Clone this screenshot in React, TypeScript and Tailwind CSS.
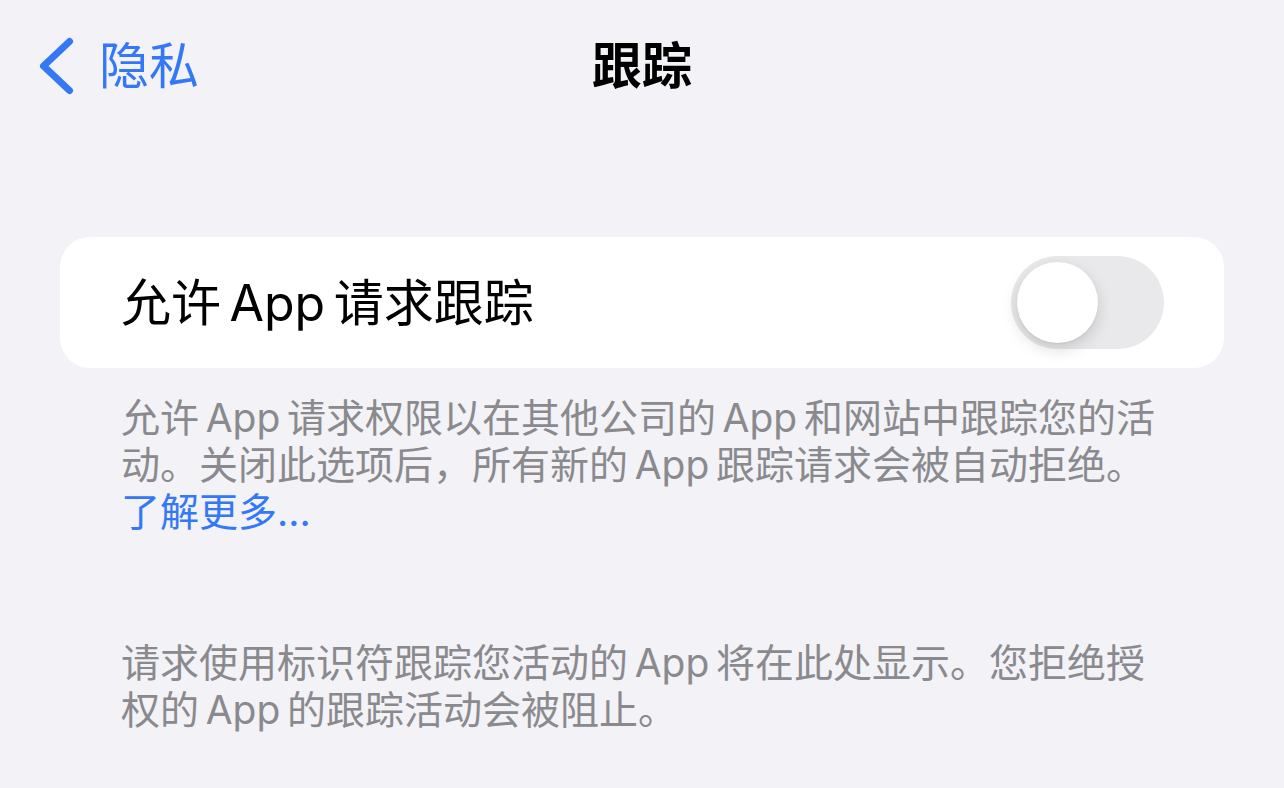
const FONT = "font-['Inter','Noto_Sans_CJK_SC',sans-serif]";

// Latin words inside Chinese text get a little breathing room, like iOS does
const Latin = ({ children }: { children: React.ReactNode }) => (
  <span className="mx-[0.17em]">{children}</span>
);

const BackChevron = () => (
  <svg width="38" height="60" viewBox="0 0 38 60" fill="none" className="shrink-0">
    <path
      d="M32.5 5.5 L6.5 30 L32.5 54.5"
      stroke="currentColor"
      strokeWidth="7"
      strokeLinecap="round"
      strokeLinejoin="round"
    />
  </svg>
);

const Toggle = ({ on = false }: { on?: boolean }) => (
  <div
    className={`relative h-[93px] w-[153px] shrink-0 rounded-full ${
      on ? 'bg-[#34c759]' : 'bg-[#e9e9eb]'
    }`}
  >
    <div
      className={`absolute top-[6px] h-[81px] w-[81px] rounded-full bg-white shadow-[0_6px_16px_rgba(0,0,0,0.15),0_1px_2px_rgba(0,0,0,0.06)] ${
        on ? 'right-[6px]' : 'left-[6px]'
      }`}
    />
  </div>
);

export default function App() {
  return (
    <div className={`min-h-screen w-full bg-[#f2f2f7] ${FONT} antialiased`}>
      {/* Nav bar */}
      <header className="grid h-[132px] grid-cols-[1fr_auto_1fr] items-center">
        <button className="flex items-center gap-[24px] pl-[37px] text-[#3478f6]">
          <BackChevron />
          <span className="text-[50px] leading-none">隐私</span>
        </button>
        <h1 className="text-[50px] font-semibold leading-none text-black">跟踪</h1>
        <div />
      </header>

      {/* Setting card */}
      <section className="mx-[60px] mt-[105px] flex h-[131px] items-center justify-between rounded-[30px] bg-white pl-[61px] pr-[60px]">
        <span className="text-[50px] leading-none text-black">
          允许<Latin>App</Latin>请求跟踪
        </span>
        <Toggle />
      </section>

      <p className="mt-[26px] px-[121px] text-[39px] leading-[47px] text-[#8a8a8e]">
        允许<Latin>App</Latin>请求权限以在其他公司的<Latin>App</Latin>和网站中跟踪您的活
        <br />
        动。关闭此选项后，所有新的<Latin>App</Latin>跟踪请求会被自动拒绝。
        <br />
        <span className="text-[#3478f6]">了解更多...</span>
      </p>

      <p className="mt-[104px] px-[121px] text-[39px] leading-[47px] text-[#8a8a8e]">
        请求使用标识符跟踪您活动的<Latin>App</Latin>将在此处显示。您拒绝授
        <br />
        权的<Latin>App</Latin>的跟踪活动会被阻止。
      </p>
    </div>
  );
}
